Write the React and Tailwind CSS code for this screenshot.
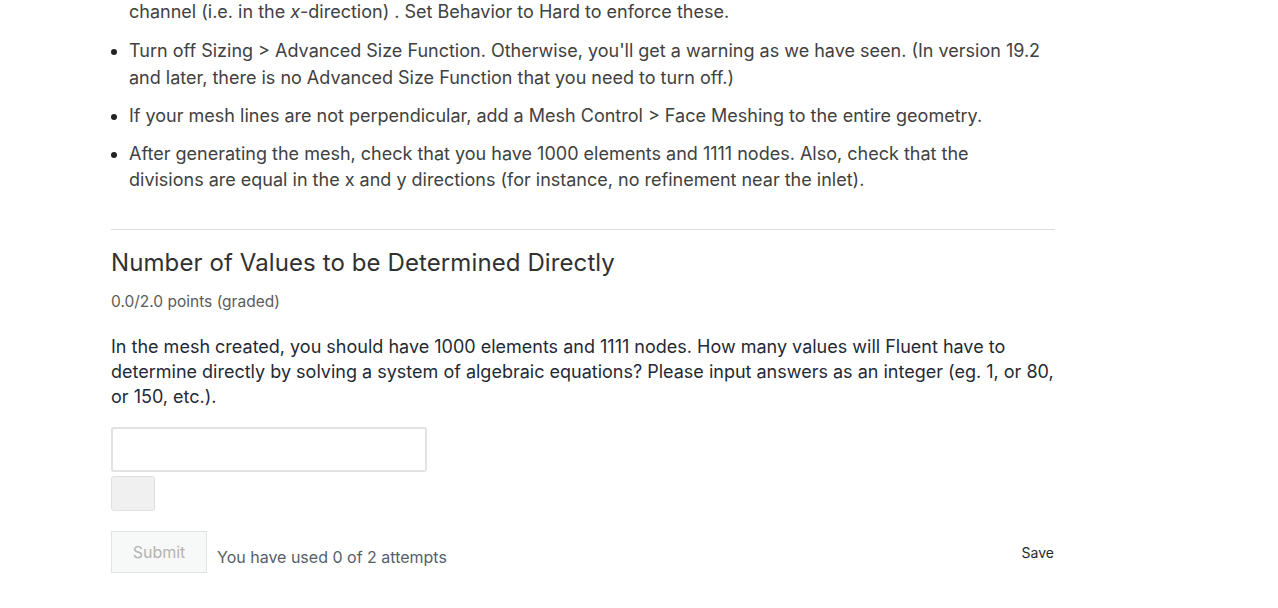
export default function App() {
  const items = [
    "Turn off Sizing > Advanced Size Function. Otherwise, you'll get a warning as we have seen. (In version 19.2 and later, there is no Advanced Size Function that you need to turn off.)",
    'If your mesh lines are not perpendicular, add a Mesh Control > Face Meshing to the entire geometry.',
    'After generating the mesh, check that you have 1000 elements and 1111 nodes. Also, check that the divisions are equal in the x and y directions (for instance, no refinement near the inlet).',
  ];

  return (
    <div className="min-h-[608px] bg-white font-['Inter','Liberation_Sans',sans-serif]">
      <div className="ml-[111px] w-[944px]">
        <div className="-mt-[1px] pl-[18px] text-[18px] leading-[26.5px] text-[#414141]">
          channel (i.e. in the <em>x</em>-direction) . Set Behavior to Hard to enforce these.
        </div>
        <ul className="mt-[12.5px] list-disc pl-[18px] text-[18px] leading-[26.5px] text-[#414141] marker:text-[#222]">
          {items.map((t) => (
            <li key={t} className="mb-[11.5px] pr-[14px] last:mb-0">
              {t}
            </li>
          ))}
        </ul>

        <div className="mt-[35px] border-t border-[#dddddd]" />

        <h3 className="mt-[18px] text-[24px] leading-[30px] tracking-[0.1px] text-[#313131]">
          Number of Values to be Determined Directly
        </h3>
        <p className="mt-[14px] text-[15.5px] leading-[20px] text-[#5b5b5b]">0.0/2.0 points (graded)</p>

        <p className="mt-[22.5px] -mr-[8px] text-[18px] leading-[25px] text-[#1f2a35]">
          In the mesh created, you should have 1000 elements and 1111 nodes. How many values will Fluent have to
          determine directly by solving a system of algebraic equations? Please input answers as an integer (eg. 1, or
          80, or 150, etc.).
        </p>

        <input
          type="text"
          className="mt-[17.5px] block h-[45px] w-[316px] rounded-[3px] border-2 border-[#e2e2e2] bg-white px-2 outline-none"
        />
        <div className="mt-[4px] h-[35px] w-[44px] rounded-[3px] border border-[#e0e0e0] bg-[#f0f0f0]" />

        <div className="mt-[20px] flex items-start">
          <button className="h-[42px] w-[96px] border border-[#e3e3e3] bg-[#f7f8f8] text-[16px] text-[#b3b3b3]">
            Submit
          </button>
          <span className="ml-[10px] mt-[16px] text-[16px] leading-[20px] text-[#56606a]">
            You have used 0 of 2 attempts
          </span>
          <span className="ml-auto mt-[12px] mr-[1px] text-[14px] leading-[20px] text-[#2a2a2a]">Save</span>
        </div>
      </div>
    </div>
  );
}
